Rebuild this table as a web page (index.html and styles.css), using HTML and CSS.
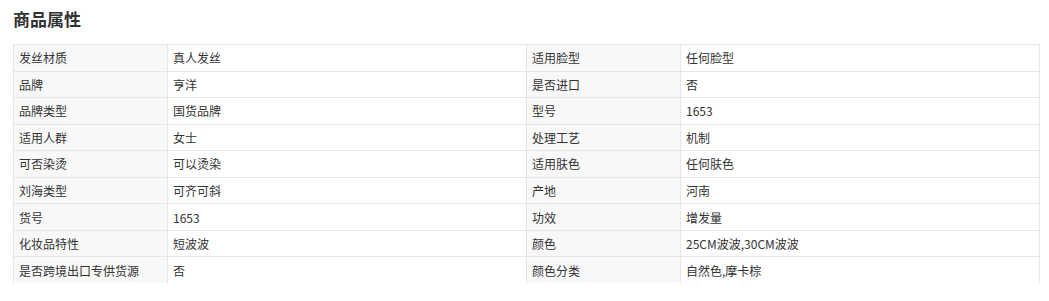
FILE: index.html
```html
<!DOCTYPE html>
<html lang="zh">
<head>
<meta charset="utf-8">
<link rel="stylesheet" href="styles.css">
</head>
<body>
<div class="page">
  <h2 class="title">商品属性</h2>
  <table class="attrs">
    <colgroup><col class="c-label"><col class="c-value"><col class="c-label"><col class="c-value"></colgroup>
    <tbody>
      <tr><td class="label">发丝材质</td><td>真人发丝</td><td class="label">适用脸型</td><td>任何脸型</td></tr>
      <tr><td class="label">品牌</td><td>亨洋</td><td class="label">是否进口</td><td>否</td></tr>
      <tr><td class="label">品牌类型</td><td>国货品牌</td><td class="label">型号</td><td>1653</td></tr>
      <tr><td class="label">适用人群</td><td>女士</td><td class="label">处理工艺</td><td>机制</td></tr>
      <tr><td class="label">可否染烫</td><td>可以烫染</td><td class="label">适用肤色</td><td>任何肤色</td></tr>
      <tr><td class="label">刘海类型</td><td>可齐可斜</td><td class="label">产地</td><td>河南</td></tr>
      <tr><td class="label">货号</td><td>1653</td><td class="label">功效</td><td>增发量</td></tr>
      <tr><td class="label">化妆品特性</td><td>短波波</td><td class="label">颜色</td><td>25CM波波,30CM波波</td></tr>
      <tr class="last"><td class="label">是否跨境出口专供货源</td><td>否</td><td class="label">颜色分类</td><td>自然色,摩卡棕</td></tr>
    </tbody>
  </table>
</div>
</body>
</html>
```

FILE: styles.css
```css
html, body {
  margin: 0;
  padding: 0;
  background: #fff;
}
.page {
  padding: 0 9px 0 13px;
  font-family: "Noto Sans CJK SC", "Noto Sans", sans-serif;
  color: #333;
}
.title {
  margin: 0;
  padding-top: 7px;
  height: 44px;
  box-sizing: border-box;
  font-size: 17px;
  line-height: 24px;
  font-weight: bold;
  color: #333;
}
.attrs {
  width: 1027px;
  border-collapse: collapse;
  table-layout: fixed;
  font-size: 12px;
}
.c-label { width: 154px; }
.c-value { width: 359px; }
.attrs td {
  border: 1px solid #e6e6e6;
  border-top-width: 0;
  padding: 0 5px;
  height: 25.56px;
  line-height: 17px;
  vertical-align: middle;
  color: #333;
  white-space: nowrap;
  overflow: hidden;
}
.attrs tr:first-child td { border-top-width: 1px; }
.attrs tr.last td { border-bottom: 0; }
.attrs td.label {
  background: #f8f8f8;
}
```
